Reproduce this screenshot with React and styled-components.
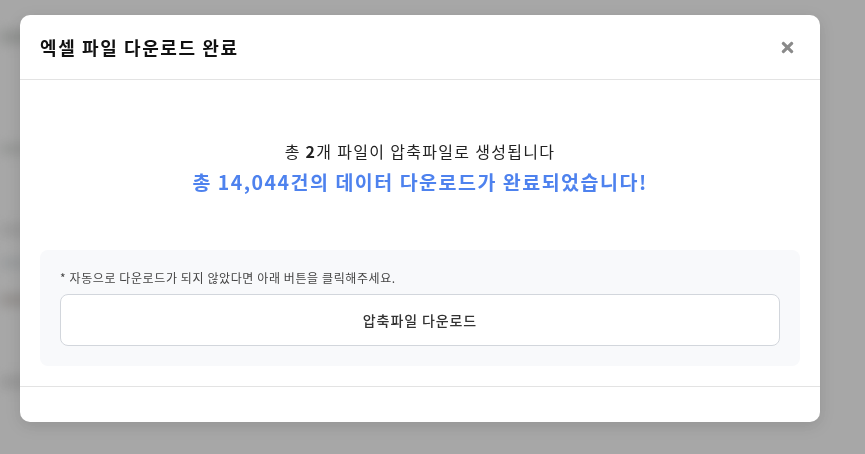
import React from "react";
import styled, { createGlobalStyle } from "styled-components";
import { FaTimes } from "react-icons/fa";

const Global = createGlobalStyle`
  html, body { margin: 0; padding: 0; }
  body {
    width: 865px;
    height: 454px;
    overflow: hidden;
    background: #adadad;
    font-family: "Noto Sans CJK KR", "Noto Sans", sans-serif;
  }
`;

const Page = styled.div`
  width: 865px;
  height: 454px;
  display: flex;
  flex-direction: column;
  padding: 30px 0 0 0;
  box-sizing: border-box;
  filter: blur(6px);
`;

const PageRow = styled.div`
  height: ${(p) => p.$h}px;
  margin-top: ${(p) => p.$mt}px;
  width: ${(p) => p.$w}px;
  background: ${(p) => p.$c};
`;

const Overlay = styled.div`
  position: fixed;
  inset: 0;
  background: rgba(150, 150, 150, 0.25);
  display: flex;
  align-items: flex-start;
  justify-content: flex-start;
  padding: 15px 0 0 20px;
  box-sizing: border-box;
`;

const Modal = styled.div`
  width: 800px;
  height: 407px;
  background: #ffffff;
  border-radius: 10px;
  box-shadow: 0 4px 16px rgba(0, 0, 0, 0.12);
  display: flex;
  flex-direction: column;
  overflow: hidden;
`;

const Header = styled.div`
  height: 65px;
  flex: none;
  box-sizing: border-box;
  border-bottom: 1px solid #e3e3e3;
  display: flex;
  align-items: center;
  justify-content: space-between;
  padding: 0 24px 0 20px;
`;

const Title = styled.h2`
  margin: 0;
  font-size: 18px;
  font-weight: 700;
  color: #111;
  letter-spacing: 1.6px;
  line-height: 1;
  padding-bottom: 1px;
`;

const CloseButton = styled.button`
  border: none;
  background: none;
  padding: 0;
  display: flex;
  align-items: center;
  justify-content: center;
  color: #8a8a8a;
  cursor: pointer;
`;

const Body = styled.div`
  flex: 1;
  display: flex;
  flex-direction: column;
  gap: 20px;
  padding: 20px;
  box-sizing: border-box;
  border-bottom: 1px solid #e3e3e3;
`;

const Message = styled.div`
  display: flex;
  flex-direction: column;
  align-items: center;
  gap: 4px;
  padding: 39px 0 33px;
`;

const Info = styled.p`
  margin: 0;
  font-size: 16px;
  line-height: 24px;
  letter-spacing: 1.3px;
  color: #222;
  b { font-weight: 700; }
`;

const Highlight = styled.p`
  margin: 0;
  font-size: 19.5px;
  line-height: 30px;
  letter-spacing: 1.5px;
  font-weight: 700;
  color: #4e82ee;
`;

const Notice = styled.div`
  background: #f8f9fb;
  border-radius: 8px;
  padding: 20px;
  display: flex;
  flex-direction: column;
  gap: 8px;
`;

const NoticeText = styled.p`
  margin: 0;
  font-size: 12px;
  line-height: 16px;
  letter-spacing: 0.6px;
  color: #444;
`;

const DownloadButton = styled.button`
  height: 52px;
  width: 100%;
  background: #fff;
  border: 1px solid #d2d6dc;
  border-radius: 8px;
  font-family: inherit;
  font-size: 14px;
  font-weight: 500;
  letter-spacing: 0.9px;
  color: #333;
  cursor: pointer;
`;

const Footer = styled.div`
  height: 35px;
  flex: none;
`;

const rows = [
  { h: 14, mt: 0, w: 70, c: "#8f918f" },
  { h: 10, mt: 100, w: 50, c: "#939593" },
  { h: 12, mt: 70, w: 40, c: "#999" },
  { h: 10, mt: 22, w: 30, c: "#979a9c" },
  { h: 12, mt: 26, w: 60, c: "#918d8a" },
  { h: 12, mt: 70, w: 60, c: "#959595" },
];

export default function App() {
  return (
    <>
      <Global />
      <Page>
        {rows.map((r, i) => (
          <PageRow key={i} $h={r.h} $mt={r.mt} $w={r.w} $c={r.c} />
        ))}
      </Page>
      <Overlay>
        <Modal>
          <Header>
            <Title>엑셀 파일 다운로드 완료</Title>
            <CloseButton aria-label="닫기">
              <FaTimes size={17} />
            </CloseButton>
          </Header>
          <Body>
            <Message>
              <Info>
                총 <b>2</b>개 파일이 압축파일로 생성됩니다
              </Info>
              <Highlight>총 14,044건의 데이터 다운로드가 완료되었습니다!</Highlight>
            </Message>
            <Notice>
              <NoticeText>* 자동으로 다운로드가 되지 않았다면 아래 버튼을 클릭해주세요.</NoticeText>
              <DownloadButton>압축파일 다운로드</DownloadButton>
            </Notice>
          </Body>
          <Footer />
        </Modal>
      </Overlay>
    </>
  );
}
